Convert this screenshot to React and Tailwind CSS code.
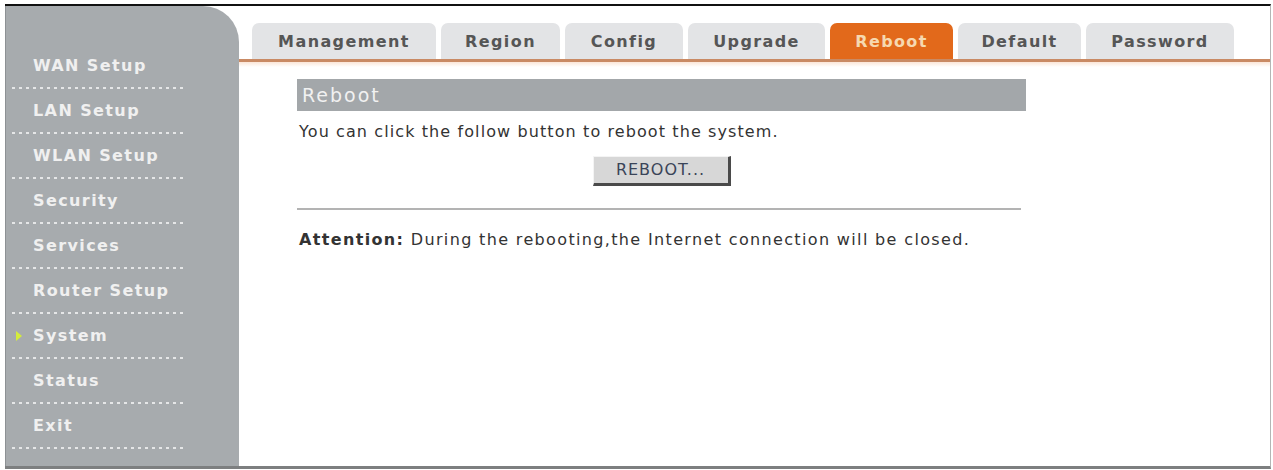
import { useState } from "react";

const menu = [
  "WAN Setup",
  "LAN Setup",
  "WLAN Setup",
  "Security",
  "Services",
  "Router Setup",
  "System",
  "Status",
  "Exit",
];

const tabs = [
  { label: "Management", w: "w-[184px]" },
  { label: "Region", w: "w-[119px]" },
  { label: "Config", w: "w-[118px]" },
  { label: "Upgrade", w: "w-[137px]" },
  { label: "Reboot", w: "w-[123px]" },
  { label: "Default", w: "w-[123px]" },
  { label: "Password", w: "w-[148px]" },
];

function Sidebar({ active }) {
  return (
    <div className="w-[234px] shrink-0 bg-[#a7abae] rounded-tr-[36px] border-l border-l-[#8d9194] pt-[38px]">
      {menu.map((item) => (
        <div key={item} className="h-[45px] relative flex flex-col">
          <div className="flex-1 flex items-center pl-[27px] text-[16px] font-bold tracking-[1.4px] text-[#f0f0f0]">
            {item === active && (
              <span className="absolute left-[10px] w-0 h-0 border-y-[5px] border-y-transparent border-l-[6px] border-l-[#d4ec3c]" />
            )}
            {item}
          </div>
          <div className="ml-[6px] w-[174px] h-[2px] bg-[linear-gradient(to_right,rgba(255,255,255,0.7)_50%,transparent_50%)] bg-[length:7px_2px]" />
        </div>
      ))}
    </div>
  );
}

function Tabs({ active, onSelect }) {
  return (
    <div className="pt-[17px]">
      <div className="flex gap-[5px] pl-[13px]">
        {tabs.map((t) => {
          const on = t.label === active;
          return (
            <button
              key={t.label}
              onClick={() => onSelect(t.label)}
              className={`${t.w} h-[36px] rounded-t-[7px] flex items-center justify-center pt-[2px] text-[16px] font-bold tracking-[1.4px] ${
                on ? "bg-[#e2691b] text-[#f6d8b0]" : "bg-[#e3e4e6] text-[#565656]"
              }`}
            >
              {t.label}
            </button>
          );
        })}
      </div>
      <div className="h-[3px] bg-[#c98a64]" />
      <div className="h-[5px] bg-[linear-gradient(to_bottom,#fbe6d8,#ffffff)]" />
    </div>
  );
}

export default function App() {
  const [tab, setTab] = useState("Reboot");

  return (
    <div className="w-[1273px] h-[470px] bg-white font-['DejaVu_Sans',sans-serif] pt-[4px] pl-[5px]">
      <div className="w-[1266px] h-[465px] border-t-2 border-t-[#111] border-b-[3px] border-b-[#7d7f80] border-r border-r-[#b5b5b5] flex">
        <Sidebar active="System" />

        <div className="flex-1 flex flex-col">
          <Tabs active={tab} onSelect={setTab} />

          <div className="ml-[58px] w-[729px] pt-[12px]">
            <div className="h-[32px] bg-[#a3a7aa] flex items-center pl-[5px] text-[19px] tracking-[2px] text-[#f1f1f1]">
              Reboot
            </div>
            <p className="mt-[11px] ml-[2px] text-[16px] tracking-[1.1px] text-[#333] leading-[20px]">
              You can click the follow button to reboot the system.
            </p>
            <div className="flex justify-center mt-[14px]">
              <button className="w-[138px] h-[30px] bg-[#d7d7d7] border border-t-[#f4f4f4] border-l-[#f4f4f4] border-r-[3px] border-b-[3px] border-r-[#4a4a4a] border-b-[#4a4a4a] text-[16px] text-[#3a4458] tracking-[1px]">
                REBOOT...
              </button>
            </div>
            <div className="mt-[22px] h-[2px] bg-[#b3b3b3] w-[724px]" />
            <p className="mt-[20px] ml-[2px] text-[16px] tracking-[1.35px] text-[#333] leading-[20px]">
              <span className="font-bold">Attention:</span> During the rebooting,the Internet connection will be closed.
            </p>
          </div>
        </div>
      </div>
    </div>
  );
}
